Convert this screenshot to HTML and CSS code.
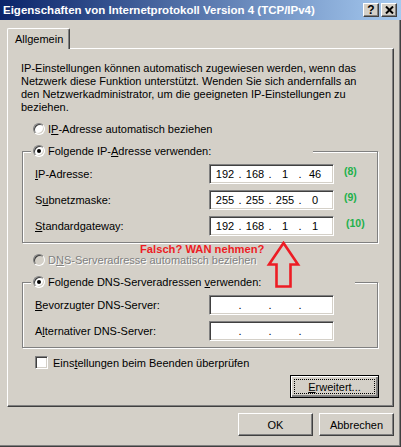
FILE: index.html
```html
<!DOCTYPE html>
<html lang="de">
<head>
  <meta charset="UTF-8">
  <title>Eigenschaften von Internetprotokoll Version 4 (TCP/IPv4)</title>
  <link rel="stylesheet" href="styles.css">
</head>
<body>
  <div class="window">
    <div class="titlebar">
      <span class="title">Eigenschaften von Internetprotokoll Version 4 (TCP/IPv4)</span>
      <div class="caption-buttons">
        <div class="caption-btn">?</div>
        <div class="caption-btn">
          <svg width="9" height="8" viewBox="0 0 9 8"><path d="M1 0.5 L8 7.5 M8 0.5 L1 7.5" stroke="#000" stroke-width="2" /></svg>
        </div>
      </div>
    </div>

    <div class="tabs">
      <div class="tab">Allgemein</div>
    </div>

    <div class="panel">
      <p class="intro">IP-Einstellungen können automatisch zugewiesen werden, wenn das<br>Netzwerk diese Funktion unterstützt. Wenden Sie sich andernfalls an<br>den Netzwerkadministrator, um die geeigneten IP-Einstellungen zu<br>beziehen.</p>

      <div class="radio-row first-radio">
        <span class="radio"></span>
        <span>I<u>P</u>-Adresse automatisch beziehen</span>
      </div>

      <div class="group group-ip">
        <div class="group-head head-ip">
          <span class="radio checked"></span>
          <span>Folgende IP-<u>A</u>dresse verwenden:</span>
        </div>
        <div class="field first-field">
          <span class="field-label"><u>I</u>P-Adresse:</span>
          <div class="ip-box"><span>192</span><i>.</i><span>168</span><i>.</i><span>1</span><i>.</i><span>46</span></div>
          <span class="note">(8)</span>
        </div>
        <div class="field">
          <span class="field-label">S<u>u</u>bnetzmaske:</span>
          <div class="ip-box"><span>255</span><i>.</i><span>255</span><i>.</i><span>255</span><i>.</i><span>0</span></div>
          <span class="note">(9)</span>
        </div>
        <div class="field">
          <span class="field-label"><u>S</u>tandardgateway:</span>
          <div class="ip-box"><span>192</span><i>.</i><span>168</span><i>.</i><span>1</span><i>.</i><span>1</span></div>
          <span class="note note-wide">(10)</span>
        </div>
      </div>

      <div class="radio-row disabled">
        <span class="radio"></span>
        <span>D<u>N</u>S-Serveradresse automatisch beziehen</span>
      </div>

      <div class="group group-dns">
        <div class="group-head head-dns">
          <span class="radio checked"></span>
          <span>Folgende DNS-Serveradressen <u>v</u>erwenden:</span>
        </div>
        <div class="field first-field">
          <span class="field-label"><u>B</u>evorzugter DNS-Server:</span>
          <div class="ip-box"><span></span><i>.</i><span></span><i>.</i><span></span><i>.</i><span></span></div>
        </div>
        <div class="field">
          <span class="field-label">A<u>l</u>ternativer DNS-Server:</span>
          <div class="ip-box"><span></span><i>.</i><span></span><i>.</i><span></span><i>.</i><span></span></div>
        </div>
      </div>

      <div class="check-row">
        <span class="checkbox"></span>
        <span>Eins<u>t</u>ellungen beim Beenden überprüfen</span>
      </div>

      <div class="panel-buttons">
        <div class="btn btn-default"><span class="focus"><u>E</u>rweitert...</span></div>
      </div>
    </div>

    <div class="actions">
      <div class="btn">OK</div>
      <div class="btn">Abbrechen</div>
    </div>

    <!-- red markup drawn over the dialog -->
    <div class="remark">Falsch? WAN nehmen?</div>
    <svg class="arrow" width="36" height="50" viewBox="0 0 36 50">
      <path d="M17.5 2 L32 23.5 L24.5 23.5 L24.5 45.5 L10.5 45.5 L10.5 23.5 L3 23.5 Z" fill="none" stroke="#ed1c24" stroke-width="2.6" stroke-linejoin="miter" />
    </svg>
  </div>
</body>
</html>
```

FILE: styles.css
```css
body {
  margin: 0;
  padding: 0;
  background-color: #d4d0c8;
  font-family: 'Liberation Sans', Arial, sans-serif;
  font-size: 11px;
  color: #000;
}

.window {
  position: relative;
  width: 401px;
  height: 447px;
  box-sizing: border-box;
  background-color: #d4d0c8;
  box-shadow: inset -1px -1px #404040, inset -2px -2px #808080;
}

u {
  text-decoration: underline;
  text-underline-offset: 1px;
}

/* title bar */
.titlebar {
  height: 20px;
  display: flex;
  align-items: center;
  justify-content: space-between;
  padding: 0 4px 0 3px;
  background: linear-gradient(to right, #0a246a, #a6caf0);
}

.title {
  color: #fff;
  font-weight: bold;
  font-size: 11.5px;
  white-space: nowrap;
}

.caption-buttons {
  display: flex;
  gap: 2px;
}

.caption-btn {
  width: 16px;
  height: 14px;
  box-sizing: border-box;
  display: flex;
  align-items: center;
  justify-content: center;
  background: #d4d0c8;
  border: 1px solid;
  border-color: #fff #404040 #404040 #fff;
  box-shadow: inset -1px -1px #808080;
  font-weight: bold;
  font-size: 12px;
  line-height: 1;
}

/* tab strip */
.tabs {
  margin-top: 7px;
  height: 21px;
  padding-left: 7px;
  display: flex;
  align-items: flex-end;
}

.tab {
  position: relative;
  z-index: 1;
  height: 21px;
  box-sizing: border-box;
  margin-bottom: -1px;
  padding: 4px 6px 0 7px;
  background: #d4d0c8;
  border: 1px solid;
  border-bottom: none;
  border-color: #fff #404040 #d4d0c8 #fff;
  border-radius: 2px 2px 0 0;
  box-shadow: inset -1px 0 #808080;
}

/* page */
.panel {
  width: 387px;
  height: 359px;
  box-sizing: border-box;
  margin-left: 7px;
  border: 1px solid;
  border-color: #fff #404040 #404040 #fff;
  box-shadow: inset -1px -1px #808080;
  padding-top: 13px;
}

.intro {
  margin: 0;
  padding-left: 13px;
  line-height: 13px;
  white-space: nowrap;
}

.radio-row {
  display: flex;
  align-items: center;
  height: 13px;
  padding-left: 25px;
  gap: 3px;
}

.first-radio {
  margin-top: 8px;
}

.radio {
  position: relative;
  width: 12px;
  height: 12px;
  box-sizing: border-box;
  border-radius: 50%;
  border: 1px solid;
  border-color: #808080 #fff #fff #808080;
  box-shadow: inset 1px 1px #404040, inset -1px -1px #d4d0c8;
  background: #fff;
  flex-shrink: 0;
}

.radio.checked::after {
  content: '';
  position: absolute;
  left: 3px;
  top: 3px;
  width: 4px;
  height: 4px;
  border-radius: 50%;
  background: #000;
}

.disabled {
  margin-top: 10px;
  color: #808080;
  text-shadow: 1px 1px #fff;
}

.disabled .radio {
  background: #d4d0c8;
}

/* group boxes */
.group {
  margin-left: 14px;
  width: 356px;
  box-sizing: border-box;
  border: 1px solid #808080;
  box-shadow: 1px 1px #fff, inset 1px 1px #fff;
  padding-bottom: 6px;
}

.group-ip {
  margin-top: 16px;
}

.group-dns {
  margin-top: 16px;
}

.group-head {
  display: flex;
  align-items: center;
  gap: 3px;
  height: 12px;
  margin: -7px 0 0 8px;
  padding-left: 2px;
  background: #d4d0c8;
}

.head-ip {
  width: 280px;
}

.head-dns {
  width: 322px;
}

.field {
  display: flex;
  align-items: center;
  height: 20px;
  margin-top: 6px;
  padding-left: 12px;
}

.first-field {
  margin-top: 7px;
}

.field-label {
  width: 174px;
}

.ip-box {
  display: flex;
  align-items: center;
  width: 125px;
  height: 20px;
  box-sizing: border-box;
  padding-left: 4px;
  background: #fff;
  border: 1px solid;
  border-color: #808080 #fff #fff #808080;
  box-shadow: inset 1px 1px #404040, inset -1px -1px #d4d0c8;
}

.ip-box span {
  width: 22px;
  text-align: center;
}

.ip-box i {
  font-style: normal;
  width: 8px;
  text-align: center;
}

.note {
  margin: -7px 0 0 10px;
  color: #22b14c;
  font-weight: bold;
  font-size: 10.5px;
}

.note-wide {
  margin-left: 12px;
}

.check-row {
  display: flex;
  align-items: center;
  gap: 5px;
  margin-top: 8px;
  padding-left: 27px;
}

.checkbox {
  width: 13px;
  height: 13px;
  box-sizing: border-box;
  background: #fff;
  border: 1px solid;
  border-color: #808080 #fff #fff #808080;
  box-shadow: inset 1px 1px #404040, inset -1px -1px #d4d0c8;
}

.panel-buttons {
  display: flex;
  justify-content: flex-end;
  margin-top: 6px;
  padding-right: 14px;
}

/* buttons */
.btn {
  width: 75px;
  height: 23px;
  box-sizing: border-box;
  display: flex;
  align-items: center;
  justify-content: center;
  background: #d4d0c8;
  border: 1px solid;
  border-color: #fff #404040 #404040 #fff;
  box-shadow: inset -1px -1px #808080;
}

.btn-default {
  width: 89px;
  border-color: #000;
  box-shadow: inset 1px 1px #fff, inset -2px -2px #808080, inset -1px -1px #404040;
}

.focus {
  display: flex;
  align-items: center;
  justify-content: center;
  width: 79px;
  height: 13px;
  border: 1px dotted #000;
}

.actions {
  display: flex;
  justify-content: flex-end;
  gap: 6px;
  margin-top: 6px;
  padding-right: 7px;
}

/* annotation */
.remark {
  position: absolute;
  left: 140px;
  top: 243px;
  color: #ed1c24;
  font-weight: bold;
  font-size: 11.2px;
}

.arrow {
  position: absolute;
  left: 266px;
  top: 241px;
}
```
